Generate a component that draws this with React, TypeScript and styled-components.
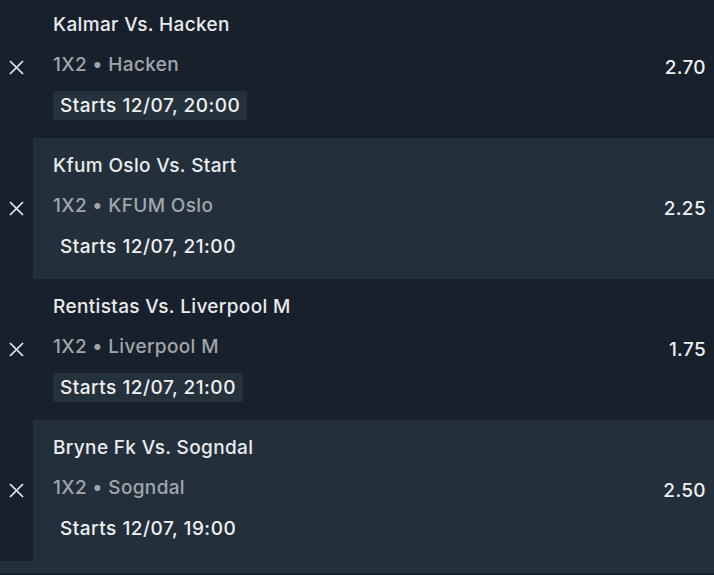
import React from "react";
import styled, { createGlobalStyle } from "styled-components";

const Global = createGlobalStyle`
  html, body { margin: 0; padding: 0; background: #18202b; }
  body { font-family: Inter, "Noto Sans", sans-serif; -webkit-font-smoothing: antialiased; }
`;

const List = styled.div`
  display: flex;
  flex-direction: column;
  margin-top: -3px;
  background: #18202b;
`;

const Row = styled.div`
  display: flex;
  align-items: stretch;
  height: 141px;
`;

const RemoveCell = styled.div`
  width: 33px;
  flex: none;
  display: flex;
  align-items: center;
  justify-content: center;
  background: #18202b;
`;

const Body = styled.div<{ $alt: boolean }>`
  flex: 1;
  display: flex;
  align-items: center;
  justify-content: space-between;
  padding: 0 8px 0 20px;
  background: ${(p) => (p.$alt ? "#232f3a" : "#18202b")};
`;

const Info = styled.div`
  display: flex;
  flex-direction: column;
  align-items: flex-start;
  padding-top: 17px;
  padding-bottom: 17px;
  height: 100%;
  box-sizing: border-box;
`;

const Title = styled.div`
  font-size: 19px;
  letter-spacing: 0.35px;
  line-height: 22px;
  font-weight: 500;
  color: #e9ebee;
`;

const Market = styled.div`
  margin-top: 18px;
  font-size: 19px;
  letter-spacing: 0.35px;
  line-height: 22px;
  font-weight: 500;
  color: #a1a6ac;
`;

const Starts = styled.div<{ $alt: boolean }>`
  margin-top: 15px;
  height: 29px;
  display: flex;
  align-items: center;
  padding: 0 7px;
  border-radius: 2px;
  font-size: 19px;
  letter-spacing: 0.5px;
  font-weight: 500;
  color: #eef0f2;
  background: ${(p) => (p.$alt ? "transparent" : "#25313b")};
`;

const Odds = styled.div`
  font-size: 19px;
  letter-spacing: 0.35px;
  font-weight: 500;
  color: #eef0f2;
`;

const Footer = styled.div`
  height: 12px;
  background: #232f3a;
  border-bottom: 2px solid #18202b;
`;

const CloseIcon = () => (
  <svg width="15" height="15" viewBox="0 0 15 15" fill="none">
    <path d="M1 1L14 14M14 1L1 14" stroke="#e9ebee" strokeWidth="1.7" />
  </svg>
);

const bets = [
  { title: "Kalmar Vs. Hacken", pick: "Hacken", start: "Starts 12/07, 20:00", odds: "2.70" },
  { title: "Kfum Oslo Vs. Start", pick: "KFUM Oslo", start: "Starts 12/07, 21:00", odds: "2.25" },
  { title: "Rentistas Vs. Liverpool M", pick: "Liverpool M", start: "Starts 12/07, 21:00", odds: "1.75" },
  { title: "Bryne Fk Vs. Sogndal", pick: "Sogndal", start: "Starts 12/07, 19:00", odds: "2.50" },
];

export default function App() {
  return (
    <>
      <Global />
      <List>
        {bets.map((b, i) => {
          const alt = i % 2 === 1;
          return (
            <Row key={i}>
              <RemoveCell>
                <CloseIcon />
              </RemoveCell>
              <Body $alt={alt}>
                <Info>
                  <Title>{b.title}</Title>
                  <Market>1X2 • {b.pick}</Market>
                  <Starts $alt={alt}>{b.start}</Starts>
                </Info>
                <Odds>{b.odds}</Odds>
              </Body>
            </Row>
          );
        })}
        <Footer />
      </List>
    </>
  );
}
